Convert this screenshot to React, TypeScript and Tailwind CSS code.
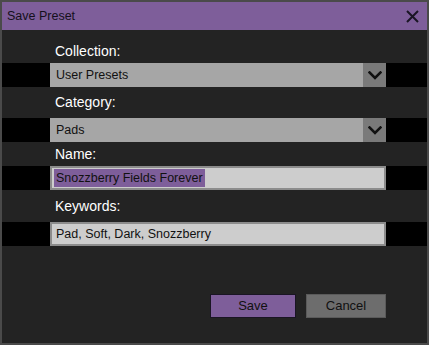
import React from "react";

const font = { fontFamily: '"Liberation Sans", Arial, sans-serif' };

const Chevron = () => (
  <svg width="14" height="9" viewBox="0 0 14 9" fill="none">
    <path d="M1.5 1.5 L7 7 L12.5 1.5" stroke="#111" strokeWidth="2.6" strokeLinecap="square" />
  </svg>
);

const Select = ({ value }: { value: string }) => (
  <div className="w-full h-[24px] bg-black">
    <div className="ml-[48px] w-[336px] h-full flex bg-[#a6a6a6]">
      <div className="flex-1 flex items-center pl-[6px] text-[12.5px] text-[#111]">{value}</div>
      <div className="w-[23px] h-full bg-[#7a7a7a] flex items-center justify-center">
        <Chevron />
      </div>
    </div>
  </div>
);

const Input = ({ children }: { children: React.ReactNode }) => (
  <div className="w-full h-[24px] bg-black">
    <div className="ml-[48px] w-[336px] h-full flex items-center bg-[#cdcdcd] border-2 border-[#8c8c8c] pl-[3px] text-[12.5px] text-[#111]">
      {children}
    </div>
  </div>
);

const Label = ({ text, h }: { text: string; h: string }) => (
  <div className={`${h} flex items-center pl-[53px] text-[14px] text-white`}>{text}</div>
);

export default function App() {
  return (
    <div style={font} className="w-[429px] h-[345px] bg-[#232323] border-2 border-[#4a4a4a] flex flex-col overflow-hidden">
      <div className="h-[28px] shrink-0 bg-[#7e5e9a] flex items-center justify-between pl-[5px] pr-[8px]">
        <span className="text-[12.5px] text-[#15101c]">Save Preset</span>
        <svg width="13" height="13" viewBox="0 0 13 13">
          <path d="M1 1 L12 12 M12 1 L1 12" stroke="#1a1524" strokeWidth="2" />
        </svg>
      </div>
      <div className="h-[9px]" />
      <Label text="Collection:" h="h-[24px]" />
      <Select value="User Presets" />
      <Label text="Category:" h="h-[31px]" />
      <Select value="Pads" />
      <Label text="Name:" h="h-[24px]" />
      <Input>
        <span className="bg-[#7e5e9a] px-[2px] -ml-[1px]">Snozzberry Fields Forever</span>
      </Input>
      <Label text="Keywords:" h="h-[32px]" />
      <Input>
        <span className="pl-[1px]">Pad, Soft, Dark, Snozzberry</span>
      </Input>
      <div className="flex justify-end gap-[10px] pr-[41px] mt-[48px]">
        <button className="w-[86px] h-[24px] bg-[#7e5e9a] border border-[#1a1524] text-[13px] text-[#111]">
          Save
        </button>
        <button className="w-[80px] h-[24px] bg-[#6d6d6d] border border-[#5a5a5a] text-[13px] text-[#111]">
          Cancel
        </button>
      </div>
    </div>
  );
}
